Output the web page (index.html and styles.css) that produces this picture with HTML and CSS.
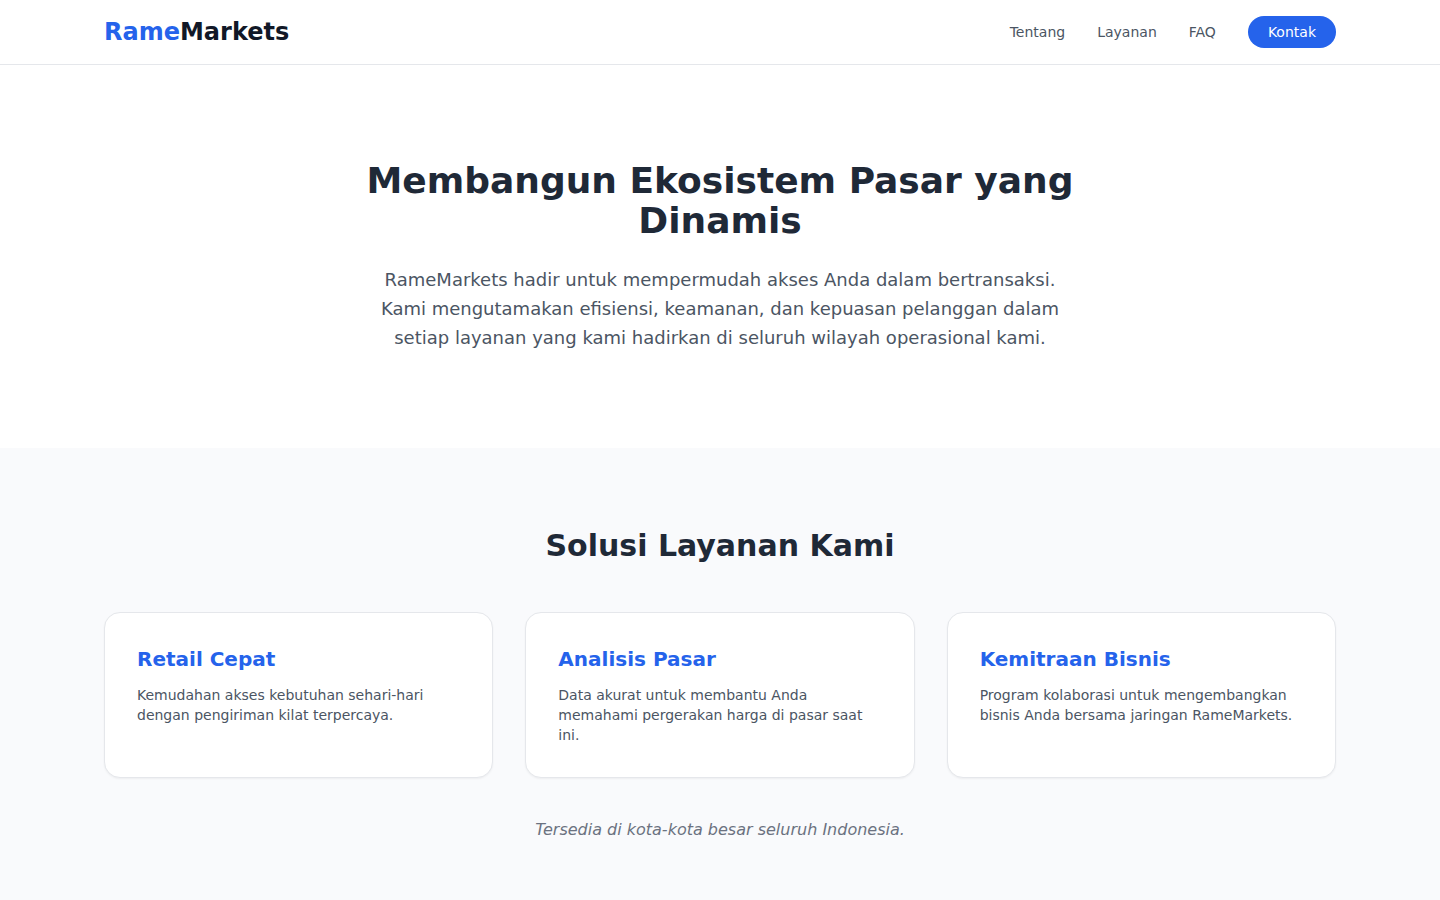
FILE: index.html
```html
<!DOCTYPE html>
<html lang="id">
<head>
    <meta charset="UTF-8">
    <meta name="viewport" content="width=device-width, initial-scale=1.0">
    <title>RameMarkets</title>
    <link rel="stylesheet" href="styles.css">
</head>
<body>
    <header class="navbar">
        <div class="container navbar-inner">
            <a href="#" class="logo"><span class="logo-accent">Rame</span>Markets</a>
            <nav class="nav-links">
                <a href="#tentang">Tentang</a>
                <a href="#layanan">Layanan</a>
                <a href="#faq">FAQ</a>
                <a href="#kontak" class="btn-contact">Kontak</a>
            </nav>
        </div>
    </header>

    <section class="hero" id="tentang">
        <div class="hero-content">
            <h1>Membangun Ekosistem Pasar yang Dinamis</h1>
            <p>RameMarkets hadir untuk mempermudah akses Anda dalam bertransaksi. Kami mengutamakan efisiensi, keamanan, dan kepuasan pelanggan dalam setiap layanan yang kami hadirkan di seluruh wilayah operasional kami.</p>
        </div>
    </section>

    <section class="services" id="layanan">
        <div class="container">
            <h2>Solusi Layanan Kami</h2>
            <div class="card-grid">
                <div class="card">
                    <h3>Retail Cepat</h3>
                    <p>Kemudahan akses kebutuhan sehari-hari dengan pengiriman kilat terpercaya.</p>
                </div>
                <div class="card">
                    <h3>Analisis Pasar</h3>
                    <p>Data akurat untuk membantu Anda memahami pergerakan harga di pasar saat ini.</p>
                </div>
                <div class="card">
                    <h3>Kemitraan Bisnis</h3>
                    <p>Program kolaborasi untuk mengembangkan bisnis Anda bersama jaringan RameMarkets.</p>
                </div>
            </div>
            <p class="services-note">Tersedia di kota-kota besar seluruh Indonesia.</p>
        </div>
    </section>
</body>
</html>
```

FILE: styles.css
```css
* {
    box-sizing: border-box;
    margin: 0;
    padding: 0;
}

body {
    font-family: 'DejaVu Sans', sans-serif;
    line-height: 24px;
    color: #1f2937;
    background: #ffffff;
}

a {
    color: inherit;
    text-decoration: none;
}

.container {
    max-width: 1280px;
    margin: 0 auto;
    padding: 0 24px;
}

.navbar {
    background: #ffffff;
    border-bottom: 1px solid #e5e7eb;
}

.navbar-inner {
    display: flex;
    justify-content: space-between;
    align-items: center;
    padding-top: 16px;
    padding-bottom: 16px;
}

.logo {
    font-size: 24px;
    line-height: 32px;
    font-weight: 700;
    color: #111827;
}

.logo-accent {
    color: #2563eb;
}

.nav-links {
    display: flex;
    align-items: center;
    gap: 32px;
    font-size: 14px;
    line-height: 20px;
    color: #4b5563;
}

.btn-contact {
    padding: 6px 20px;
    border-radius: 999px;
    background: #2563eb;
    color: #ffffff;
}

.hero {
    padding: 96px 24px;
    text-align: center;
}

.hero-content {
    max-width: 720px;
    margin: 0 auto;
}

.hero h1 {
    margin-bottom: 24px;
    font-size: 36px;
    line-height: 40px;
    font-weight: 700;
}

.hero p {
    font-size: 18px;
    line-height: 29px;
    color: #4b5563;
}

.services {
    padding: 80px 0;
    background: #f9fafc;
}

.services h2 {
    margin-bottom: 48px;
    font-size: 30px;
    line-height: 36px;
    font-weight: 700;
    text-align: center;
}

.card-grid {
    display: grid;
    grid-template-columns: repeat(3, 1fr);
    gap: 32px;
}

.card {
    padding: 32px;
    border: 1px solid #e5e7eb;
    border-radius: 16px;
    background: #ffffff;
    box-shadow: 0 1px 2px rgba(0, 0, 0, 0.05);
}

.card h3 {
    margin-bottom: 12px;
    font-size: 20px;
    line-height: 28px;
    font-weight: 700;
    color: #2563eb;
}

.card p {
    font-size: 14px;
    line-height: 20px;
    color: #4b5563;
}

.services-note {
    margin-top: 40px;
    font-style: italic;
    text-align: center;
    color: #6b7280;
}

@media (max-width: 768px) {
    .card-grid {
        grid-template-columns: 1fr;
    }
}
```
